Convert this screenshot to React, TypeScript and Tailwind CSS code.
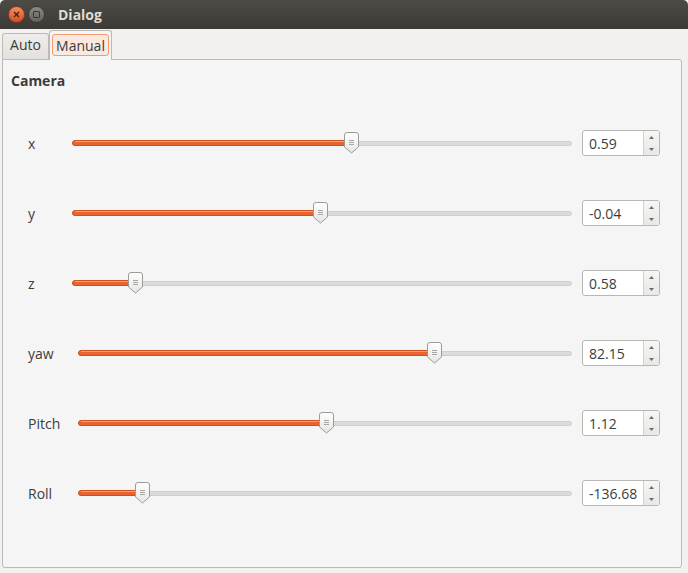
import React from "react";

type Row = { label: string; value: string; handle: number; start: number };

const rows: Row[] = [
  { label: "x", value: "0.59", handle: 351, start: 72 },
  { label: "y", value: "-0.04", handle: 320, start: 72 },
  { label: "z", value: "0.58", handle: 135, start: 72 },
  { label: "yaw", value: "82.15", handle: 434, start: 78 },
  { label: "Pitch", value: "1.12", handle: 326, start: 78 },
  { label: "Roll", value: "-136.68", handle: 142, start: 78 },
];

function Handle() {
  return (
    <svg width="15" height="22" viewBox="0 0 15 22" className="block">
      <defs>
        <linearGradient id="hg" x1="0" y1="0" x2="0" y2="1">
          <stop offset="0" stopColor="#ffffff" />
          <stop offset="1" stopColor="#e6e5e3" />
        </linearGradient>
      </defs>
      <path
        d="M3 0.5 H12 Q14.5 0.5 14.5 3 V15 L7.5 21 L0.5 15 V3 Q0.5 0.5 3 0.5 Z"
        fill="url(#hg)"
        stroke="#9d9b96"
        strokeWidth="1"
      />
      <line x1="5" y1="8.5" x2="10" y2="8.5" stroke="#a8a6a2" strokeWidth="1" />
      <line x1="5" y1="10.5" x2="10" y2="10.5" stroke="#a8a6a2" strokeWidth="1" />
      <line x1="5" y1="12.5" x2="10" y2="12.5" stroke="#a8a6a2" strokeWidth="1" />
    </svg>
  );
}

function Slider({ start, handle }: { start: number; handle: number }) {
  const width = 572 - start;
  const pos = handle - start;
  return (
    <div className="relative h-[22px]" style={{ width }}>
      <div className="absolute left-0 right-0 top-[9px] h-[5px] rounded-full bg-[#dcdbd9] border border-[#cfcecb]" />
      <div
        className="absolute left-0 top-[8px] h-[6px] rounded-full bg-[#e8632f] border border-[#c9521f]"
        style={{ width: pos }}
      >
        <div className="mx-[2px] mt-[0px] h-[1px] bg-[#f3a07e]" />
      </div>
      <div className="absolute top-0" style={{ left: pos - 7 }}>
        <Handle />
      </div>
    </div>
  );
}

function SpinBox({ value }: { value: string }) {
  return (
    <div className="flex h-[26px] w-[78px] rounded-[3px] border border-[#b9b7b2] bg-white overflow-hidden">
      <div className="flex flex-1 items-center pl-[6px] text-[14px] text-[#3c3c3c]">{value}</div>
      <div className="flex w-[16px] flex-col border-l border-[#d3d1cd] bg-gradient-to-b from-[#f6f6f5] to-[#e9e8e6]">
        <div className="flex flex-1 items-center justify-center">
          <svg width="5" height="3" viewBox="0 0 5 3">
            <path d="M0 3 L2.5 0 L5 3 Z" fill="#6c6b67" />
          </svg>
        </div>
        <div className="flex flex-1 items-center justify-center">
          <svg width="5" height="3" viewBox="0 0 5 3">
            <path d="M0 0 L2.5 3 L5 0 Z" fill="#6c6b67" />
          </svg>
        </div>
      </div>
    </div>
  );
}

export default function App() {
  return (
    <div
      className="flex h-[573px] w-[688px] flex-col bg-[#f2f1f0]"
      style={{ fontFamily: '"Open Sans", "DejaVu Sans", sans-serif' }}
    >
      {/* title bar */}
      <div className="flex h-[29px] items-center rounded-t-[5px] bg-gradient-to-b from-[#4c4b46] to-[#3b3a36] pl-[8px]">
        <div className="flex h-[17px] w-[17px] items-center justify-center rounded-full border border-[#8c3a18] bg-gradient-to-b from-[#f78a5d] to-[#d84d1c]">
          <svg width="7" height="7" viewBox="0 0 7 7">
            <path d="M1 1 L6 6 M6 1 L1 6" stroke="#3a2a22" strokeWidth="1.4" />
          </svg>
        </div>
        <div className="ml-[3px] flex h-[17px] w-[17px] items-center justify-center rounded-full border border-[#3a3935] bg-gradient-to-b from-[#8a8984] to-[#64635e]">
          <div className="h-[7px] w-[7px] rounded-[1px] border-[1.5px] border-[#3a3935]" />
        </div>
        <div className="ml-[13px] text-[14px] font-bold text-[#dfdbd2]">Dialog</div>
      </div>

      {/* tabs */}
      <div className="relative z-10 flex h-[30px] items-end pl-[2px]">
        <div className="flex h-[26px] w-[47px] items-center justify-center rounded-t-[3px] border border-b-0 border-[#bcbab5] bg-gradient-to-b from-[#eeedeb] to-[#e3e1de] pb-[4px] text-[14px] text-[#3c3c3c]">
          Auto
        </div>
        <div className="flex h-[30px] w-[63px] items-center justify-center rounded-t-[3px] border border-b-0 border-[#bcbab5] bg-[#f5f5f5] mb-[-1px] pb-[1px]">
          <div className="flex h-[22px] items-center rounded-[3px] border border-[#f29a72] bg-[#fbe9e0] px-[3px] text-[14px] text-[#3c3c3c]">
            Manual
          </div>
        </div>
      </div>

      {/* panel */}
      <div className="mb-[5px] ml-[2px] mr-[6px] flex flex-1 flex-col rounded-b-[3px] rounded-tr-[3px] border border-[#bcbab5] bg-[#f5f5f5]">
        <div className="pl-[8px] pt-[12px] text-[14px] font-bold leading-[18px] text-[#3c3c3c]">Camera</div>
        <div className="mt-[18px] flex flex-col">
          {rows.map((r) => (
            <div key={r.label} className="flex h-[70px] items-center">
              <div
                className="pl-[25px] text-[14px] text-[#3c3c3c]"
                style={{ width: r.start - 3 }}
              >
                {r.label}
              </div>
              <Slider start={r.start} handle={r.handle} />
              <div className="ml-[10px]">
                <SpinBox value={r.value} />
              </div>
            </div>
          ))}
        </div>
      </div>
    </div>
  );
}
